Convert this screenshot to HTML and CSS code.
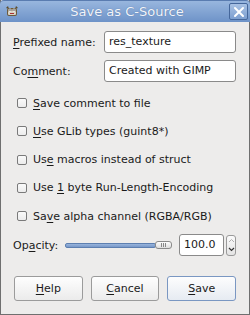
FILE: index.html
```html
<!DOCTYPE html>
<html>
<head>
<meta charset="utf-8">
<link rel="stylesheet" href="styles.css">
</head>
<body>
<div class="window">
  <div class="titlebar">
    <svg class="appicon" width="14" height="13" viewBox="0 0 14 13">
      <path d="M1 3 L3 1 L4 4 Z" fill="#5a4a2a"/>
      <path d="M13 3 L11 1 L10 4 Z" fill="#5a4a2a"/>
      <rect x="2" y="3" width="10" height="8" rx="2" fill="#6b5a3c"/>
      <rect x="3" y="6" width="8" height="4" rx="1" fill="#d8d2c4"/>
      <circle cx="5" cy="5" r="1.6" fill="#fff"/>
      <circle cx="9" cy="5" r="1.6" fill="#fff"/>
      <circle cx="5" cy="5" r="0.7" fill="#000"/>
      <circle cx="9" cy="5" r="0.7" fill="#000"/>
      <rect x="5" y="8" width="4" height="1" fill="#a33"/>
    </svg>
    <div class="title">Save as C-Source</div>
    <div class="close">
      <svg width="12" height="12" viewBox="0 0 12 12"><path d="M2 2 L10 10 M10 2 L2 10" stroke="#fff" stroke-width="2" stroke-linecap="round"/></svg>
    </div>
  </div>
  <div class="body">
    <div class="fields">
      <label class="lbl"><u>P</u>refixed name:</label>
      <div class="entry">res_texture</div>
      <label class="lbl">Co<u>m</u>ment:</label>
      <div class="entry">Created with GIMP</div>
    </div>
    <div class="checks">
      <div class="check"><span class="box"></span><span><u>S</u>ave comment to file</span></div>
      <div class="check"><span class="box"></span><span><u>U</u>se GLib types (guint8*)</span></div>
      <div class="check"><span class="box"></span><span>Us<u>e</u> macros instead of struct</span></div>
      <div class="check"><span class="box"></span><span>Use <u>1</u> byte Run-Length-Encoding</span></div>
      <div class="check"><span class="box"></span><span>Sa<u>v</u>e alpha channel (RGBA/RGB)</span></div>
    </div>
    <div class="opacity">
      <span class="olbl">Op<u>a</u>city:</span>
      <div class="slider">
        <div class="track"></div>
        <div class="handle"><i></i><i></i><i></i></div>
      </div>
      <div class="spin">
        <div class="spinval">100.0</div>
        <div class="arrows">
          <div class="arr up"><svg width="7" height="5" viewBox="0 0 7 5"><path d="M1 4 L3.5 1.5 L6 4" fill="none" stroke="#b0b0b0" stroke-width="1"/></svg></div>
          <div class="arr down"><svg width="7" height="5" viewBox="0 0 7 5"><path d="M1 1 L3.5 3.5 L6 1" fill="none" stroke="#333" stroke-width="1.2"/></svg></div>
        </div>
      </div>
    </div>
    <div class="buttons">
      <button class="btn"><u>H</u>elp</button>
      <button class="btn"><u>C</u>ancel</button>
      <button class="btn default"><u>S</u>ave</button>
    </div>
  </div>
</div>
</body>
</html>
```
FILE: styles.css
```css
* { box-sizing: border-box; }
html, body { margin: 0; padding: 0; background: #edeceb; }
body { font-family: "DejaVu Sans", sans-serif; font-size: 11px; color: #1a1a1a; white-space: nowrap; }
u { text-decoration: underline; text-underline-offset: 2px; text-decoration-thickness: 1px; }

.window {
  width: 250px;
  height: 315px;
  display: flex;
  flex-direction: column;
  background: #edeceb;
  border-left: 1px solid #6f6f6f;
  border-right: 1px solid #6f6f6f;
  border-bottom: 1px solid #6f6f6f;
}

.titlebar {
  height: 22px;
  flex: none;
  display: flex;
  align-items: center;
  background: linear-gradient(#98b6de, #6e93c8);
  border-top: 1px solid #5a7cb0;
  margin: 0 -1px;
  padding: 0 2px 0 5px;
  border-radius: 4px 4px 0 0;
}
.appicon { flex: none; }
.title {
  flex: 1;
  text-align: center;
  color: #f2f5fb;
  font-size: 13px;
  padding-left: 6px;
  text-shadow: 0 0 1px #4a6a9a;
}
.close {
  width: 19px;
  height: 17px;
  border: 1px solid #45679b;
  border-radius: 2px;
  background: linear-gradient(#a9c2e4, #7d9fd0);
  display: flex;
  align-items: center;
  justify-content: center;
}

.body {
  flex: 1;
  padding: 9px 13px 0 12px;
  display: flex;
  flex-direction: column;
}

.fields {
  display: grid;
  grid-template-columns: 91px 132px;
  row-gap: 7px;
  align-items: center;
}
.entry {
  height: 22px;
  background: #fff;
  border: 1px solid #8a8a8a;
  border-radius: 3px;
  padding: 0 4px;
  line-height: 20px;
}

.checks {
  margin-top: 11px;
  display: flex;
  flex-direction: column;
  gap: 8.3px;
}
.check {
  display: flex;
  align-items: center;
  height: 20px;
  padding-left: 4px;
  gap: 6px;
}
.box {
  width: 10px;
  height: 10px;
  border: 1px solid #7a7a7a;
  border-radius: 2px;
  background: linear-gradient(#fafafa, #ececec);
  flex: none;
}

.opacity {
  margin-top: 8px;
  display: flex;
  align-items: center;
  height: 22px;
}
.olbl { width: 52px; flex: none; }
.slider {
  width: 107px;
  height: 10px;
  display: flex;
  align-items: center;
  flex: none;
}
.track {
  width: 91px;
  height: 5px;
  background: linear-gradient(#98b4dc, #7898c8);
  border: 1px solid #5d7fb0;
  border-radius: 2px;
}
.handle {
  width: 15px;
  box-sizing: content-box;
  height: 6px;
  border: 1px solid #8a8a8a;
  border-radius: 3px;
  background: linear-gradient(#fdfdfd, #dedede);
  display: flex;
  justify-content: center;
  align-items: center;
  gap: 1px;
  margin-left: -1px;
}
.handle i { width: 1px; height: 4px; background: #888; }
.spin {
  margin-left: 7px;
  display: flex;
  align-items: center;
}
.spinval {
  width: 45px;
  height: 22px;
  background: #fff;
  border: 1px solid #8a8a8a;
  border-radius: 3px;
  padding-left: 4px;
  line-height: 20px;
}
.arrows {
  margin-left: 2px;
  width: 10px;
  height: 21px;
  border: 1px solid #9a9a9a;
  border-radius: 3px;
  background: linear-gradient(#fbfbfb, #e4e4e4);
  display: flex;
  flex-direction: column;
}
.arr { flex: 1; display: flex; align-items: center; justify-content: center; }

.buttons {
  margin-top: auto;
  margin-bottom: 13px;
  display: flex;
  gap: 8px;
  padding-left: 1px;
}
.btn {
  width: 69px;
  height: 25px;
  font-family: "DejaVu Sans", sans-serif;
  font-size: 11px;
  color: #1a1a1a;
  border: 1px solid #9b9b9b;
  border-radius: 3px;
  background: linear-gradient(#fefefe, #ebebeb);
  padding: 0;
}
.btn.default { border-color: #7a97c2; background: linear-gradient(#fdfdfd, #e6ebf2); }
```
